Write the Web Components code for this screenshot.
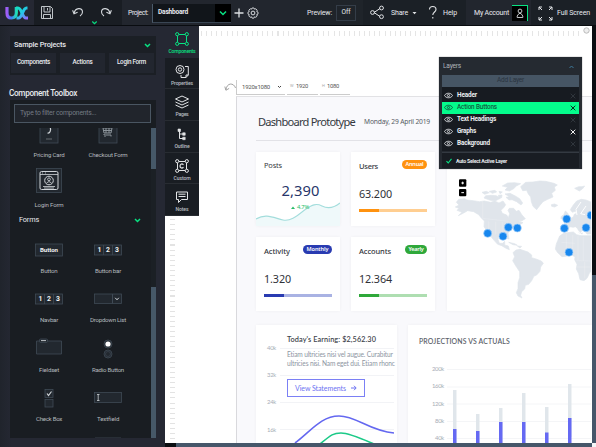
<!DOCTYPE html>
<html lang="en">
<head>
<meta charset="utf-8">
<title>UX builder</title>
<style>
html,body{margin:0;width:596px;height:447px;overflow:hidden;background:#252833;font-family:Roboto,"Liberation Sans",sans-serif;color:#e8eaee}
</style>
</head>
<body>
<ux-app></ux-app>
<script>
const define = (name, css, html) => customElements.define(name, class extends HTMLElement {
  constructor() {
    super();
    const t = document.createElement('template');
    t.innerHTML = `<style>*{box-sizing:border-box}${css}</style>` + (typeof html === 'function' ? html(this) : html);
    this.attachShadow({mode: 'open'}).append(t.content.cloneNode(true));
  }
});
const T = (w, size, text, extra = '') => `<fit-text w="${w}" style="font-size:${size}px;${extra}">${text}</fit-text>`;

define('ux-app', `:host{display:grid;grid-template-rows:26px 421px;width:596px;height:447px}
main{display:grid;grid-template-columns:165px 431px;min-height:0}`,
`<ux-topbar></ux-topbar><main><ux-sidebar></ux-sidebar><ux-workspace></ux-workspace></main>`);

define('ux-topbar', `:host{display:grid;grid-template-columns:34px 88px 178px 63px 103px 65px 65px;height:26px;border-bottom:1px solid #090c10;background:#1b2026}
div{display:flex;align-items:center;height:25px}
svg{display:block;flex:none}
.l{background:#252833;padding-left:5px}
.s{background:#191d23}.p{background:#22262e;padding-left:6px}
.sel{width:79px;height:19px;border-left:1px solid #4b5b6b;border-bottom:1px solid #3a4654;background:#11151a;margin-left:4px;padding-left:5px;justify-content:space-between}
.sel fit-text{padding-top:1px}
.dd{width:16px;height:18px;background:#000;justify-content:center}
.off{width:20px;height:16px;border:1px solid #343d48;justify-content:center;margin-left:4px}
.pv{padding-left:7px;background:#1f242a}.a{background:#22262e;padding-left:8px}
.u{width:16px;height:16px;background:#000;border-top:1px solid #09e283;border-right:1.5px solid #09e283;justify-content:center;margin-left:3px}
.f{padding-left:7px}.pv,.p,.a,.f{padding-top:1px}`,
`<div class="l"><svg width="24" height="14" viewBox="0 0 24 14" fill="none" stroke-width="3.2"><defs><linearGradient id="a"><stop stop-color="#a35cf5"/><stop offset=".45" stop-color="#3f7df5"/><stop offset="1" stop-color="#20dfb5"/></linearGradient><linearGradient id="b" x2="1" y2="1"><stop stop-color="#12e0c2"/><stop offset=".5" stop-color="#25c7e9"/><stop offset="1" stop-color="#9a63ff"/></linearGradient></defs><path d="M2 1V7Q2 12 6.500 12T11.300 7V1" stroke="url(#a)"/><path d="M11 2h2c4 0 4 10 8 10h2" stroke="url(#b)"/><path d="M22.500 2h-1c-4 0-4 10-8 10h-2" stroke="url(#b)"/></svg></div>
<div class="s"><svg width="88" height="25" viewBox="34 0 88 25" fill="none" stroke="#d3d7db"><path d="M41.500 6.500h9l2 2v10h-11zM44 7v5h6V7M47.500 8v2.500M43.500 18v-3.500h7V18" stroke-width=".9"/><path d="M74 13.500C75 7.500 82.500 7 82.500 12c0 2-1 3-2.500 4M72.600 10.300l1.400 3.400 3.600-1.400M110 13.500C109 7.500 101.500 7 101.500 12c0 2 1 3 2.500 4M111.400 10.300l-1.400 3.400-3.600-1.400" stroke-width="1.100"/><path d="M92.300 21.500l2.200 2.200 2.200-2.200" stroke="#08dc80" stroke-width="1.200"/></svg></div>
<div class="p">${T(20,6.8,'Project:')}<div class="sel">${T(30,6.6,'Dashboard','font-weight:700')}<div class="dd"><svg width="8" height="6" viewBox="0 0 8 6"><path d="M1 1.500l3 3 3-3" fill="none" stroke="#08e283" stroke-width="1.500"/></svg></div></div>
<svg width="30" height="18" viewBox="0 0 30 18" fill="none" stroke="#dcdfe2"><path d="M3.500 9h9M8 4.500v9" stroke-width="1.300"/><circle cx="22" cy="9" r="1.900"/><path d="M21 4h2l.5 1.200 1.400-.4 1.300 1.400-.5 1.300 1.300.6v2l-1.300.5.5 1.400-1.400 1.300-1.300-.5-.5 1.300h-2l-.5-1.300-1.400.5-1.300-1.400.5-1.300-1.300-.5v-2l1.300-.6-.5-1.300 1.400-1.400 1.300.4z" stroke-width=".9"/></svg></div>
<div class="pv">${T(25,7,'Preview:')}<div class="off">${T(9,6.6,'Off')}</div></div>
<div><svg width="28" height="25" viewBox="363 0 28 25" fill="none" stroke="#e1e3e6"><path d="M374 12.500l6-4M374 12.500l6 4"/><circle cx="372.500" cy="12.500" r="1.900"/><circle cx="381.500" cy="8" r="1.900"/><circle cx="381.500" cy="16.700" r="1.900"/></svg>${T(17,7,'Share','padding-top:1px')}<svg width="35" height="25" viewBox="408 0 35 25"><path d="M412.500 12h4l-2 2.300z" fill="#e1e3e6"/><path d="M429.500 9.500c0-4 6.500-4 6.500 0 0 2.500-3.200 2.500-3.200 5.500M432.800 17v1.600" fill="none" stroke="#e1e3e6" stroke-width="1.100"/></svg>${T(14,7,'Help','padding-top:1px')}</div>
<div class="a">${T(35,7,'My Account')}<div class="u"><svg width="8" height="11" viewBox="0 0 8 11" fill="none" stroke="#d6d9dc" stroke-width=".9"><circle cx="4" cy="3" r="1.900"/><path d="M1.200 9.500V8L3 5.500h2L6.800 8v1.500z"/></svg></div></div>
<div class="f"><svg width="15" height="15" viewBox="0 0 15 15" fill="none" stroke="#e3e5e8"><path d="M1 4V1h3M1 1l3 3M11 1h3v3M14 1l-3 3M1 11v3h3M1 14l3-3M14 11v3h-3M14 14l-3-3"/></svg>${T(33,7,'Full Screen','margin-left:4px')}</div>`);

define('ux-sidebar', `:host{display:flex;flex-direction:column;height:421px;padding:10px 10px 9px;background:linear-gradient(90deg,#20242c,#252833 12px)}
.sp{height:39px;flex:none;background:#1b1f25;width:146px}
.h{display:flex;align-items:center;justify-content:space-between;height:17px;padding:1px 5px 0 4px}
.b{display:flex;gap:4px;padding-left:1px}
.b div{width:45px;height:20px;background:#22262f;display:flex;align-items:center;justify-content:center}
.t{height:25px;padding-top:6px;margin-left:-1px}
.box{width:146px;height:338px;background:#191d22;padding:4px 0 0 4px}
.in{width:137px;height:19px;border:1px solid #4a5662;background:#21252c;display:flex;align-items:center;padding-left:5px;color:#747c85}
.scroll{margin-top:5px;height:310px;display:grid;grid-template-columns:136.500px 5px}
.list{height:310px;overflow:hidden}
.g{display:grid;grid-template-columns:59px 59px;grid-auto-rows:49.500px;padding-left:5.500px}
.g.f{margin-top:-14px}
.fm{height:16.500px;display:flex;justify-content:space-between;align-items:center;padding:0 10px 2px 5px}
.bar{width:5px;background:linear-gradient(#465868 0 41px,#1b2025 41px 159px,#465868 159px)}
svg{display:block}`,
`<div class="sp"><div class="h">${T(52,7.4,'Sample Projects','font-weight:500')}<svg width="7" height="5" viewBox="0 0 7 5"><path d="M1 1l2.500 2.500L6 1" fill="none" stroke="#08e283" stroke-width="1.500"/></svg></div><div class="b"><div>${T(33,6.300,'Components','font-weight:500')}</div><div>${T(20,6.300,'Actions','font-weight:500')}</div><div>${T(29,6.300,'Login Form','font-weight:500')}</div></div></div>
<div class="t">${T(68,8.200,'Component Toolbox','font-weight:500')}</div>
<div class="box"><div class="in">${T(76,6.800,'Type to filter components...')}</div><div class="scroll"><div class="list">
<div class="g f"><ux-tool icon="pricing" w="31">Pricing Card</ux-tool><ux-tool icon="cart" w="39">Checkout Form</ux-tool><ux-tool icon="login" w="29">Login Form</ux-tool></div>
<div class="fm">${T(20,7.300,'Forms')}<svg width="7" height="5" viewBox="0 0 7 5"><path d="M1 1l2.500 2.500L6 1" fill="none" stroke="#08e283" stroke-width="1.500"/></svg></div>
<div class="g"><ux-tool icon="button" w="17">Button</ux-tool><ux-tool icon="bar" w="26">Button bar</ux-tool><ux-tool icon="bar" w="18">Navbar</ux-tool><ux-tool icon="drop" w="36">Dropdown List</ux-tool><ux-tool icon="field" w="20">Fieldset</ux-tool><ux-tool icon="radio" w="32">Radio Button</ux-tool><ux-tool icon="check" w="26">Check Box</ux-tool><ux-tool icon="text" w="22">Textfield</ux-tool><ux-tool icon="none" w="1"></ux-tool><ux-tool icon="next" w="1"></ux-tool></div>
</div><div class="bar"></div></div></div>`);

const B = 'fill="#22282f" stroke="#3f4a55" stroke-width=".8"', I = 'fill="none" stroke="#cfd4d8"';
const num = 'font-weight="700" fill="#f1f2f3" text-anchor="middle"';
const tools = {
  pricing: `<rect x="-9" y="-12" width="18" height="21" ${B}/><path d="M-2-7.500q4 0 3.500 3.500t-3 3" ${I} stroke-width="1.200"/><path d="M-3 5h6" ${I} stroke-width=".4"/>`,
  cart: `<rect x="-9" y="-12" width="18" height="21" ${B}/><path d="M-5-6h9l-1 5h-7zM-4-3.500h8M-2-6v5M1-6v5M-4 0v1h7v1.500M-3.500 2.500h1" fill="none" stroke="#8c949b"/>`,
  login: `<rect x="-12.500" y="-15.500" width="25" height="24" ${B}/><rect x="-9" y="-12.500" width="18" height="18" rx="1.500" ${I}/><path d="M-9-9.500h18M-7-11h1M-4-11h1M-6 2.500h12" ${I} stroke-width=".8"/><circle cy="-3.500" r="4.300" ${I}/><circle cy="-4.700" r="1.400" ${I} stroke-width=".8"/><path d="M-2.500-1q2.500-3 5 0M-5 4h10" ${I} stroke-width=".8"/>`,
  button: `<rect x="-13.500" y="-6" width="27" height="12" ${B}/><text y="2.300" ${num} font-size="6.100" textLength="18">Button</text>`,
  bar: `<rect x="-13.500" y="-5" width="27" height="10" ${B}/><path d="M-4.500-5v10M4.500-5v10" stroke="#3f4a55" stroke-width=".8"/><g font-size="6.800"><text x="-8.500" y="2.400" ${num}>1</text><text x="0" y="2.400" ${num}>2</text><text x="9" y="2.400" ${num}>3</text></g>`,
  drop: `<rect x="-13.500" y="-5" width="27" height="9.500" ${B}/><path d="M4.500-5v9.500" stroke="#3f4a55"/><path d="M7.200-1.200L9 .8l1.800-2" ${I}/>`,
  field: `<path d="M-12.500-8h25V5h-25z" ${B}/><rect x="-9.500" y="-10" width="8" height="3.400" rx="1" ${B}/><path d="M-8-8.400h5" ${I} stroke-width=".9"/>`,
  radio: `<circle cy="-5" r="4" ${B}/><circle cy="-5" r="2.600" fill="#fff"/><circle cy="5" r="4" ${B}/><circle cy="5" r="2.500" fill="none" stroke="#3f4a55" stroke-width=".6"/>`,
  check: `<rect x="-4" y="-8.500" width="8" height="8" ${B}/><rect x="-4" y="1.500" width="8" height="7.500" ${B}/><path d="M-2-4.500l1.500 2 3-4" ${I} stroke-width="1.200"/>`,
  text: `<rect x="-13.500" y="-5.500" width="27" height="10" ${B}/><path d="M-11-3.500h2.500M-11 2.500h2.500M-9.800-3.500v6" ${I} stroke-width=".8"/>`,
  none: '', next: `<path d="M-13-10h26v6h-26z" ${B}/>`
};
define('ux-tool', `:host{display:flex;flex-direction:column;align-items:center;padding-top:3px;color:#b4b9be}
svg{overflow:visible;flex:none}fit-text{line-height:7px!important}`,
el => `<svg width="36" height="34" viewBox="-18 -17 36 34">${tools[el.getAttribute('icon')]}</svg>${T(el.getAttribute('w'),6.100,'<slot></slot>')}`);

define('ux-workspace', `:host{display:grid;grid-template-columns:427px 4px;grid-template-rows:417px 4px;height:421px;position:relative}
.c{background:#fff;display:grid;grid-template-columns:71px 356px;position:relative;overflow:hidden}
.v{background:linear-gradient(#0b0e12 249px,#46576a 249px)}
.hb{background:linear-gradient(90deg,#0b0e12 11px,#46576a 11px)}.k{background:#f5f6f8}
.left{display:flex;flex-direction:column}
.vr{flex:1;width:5px;margin:3px 0 0 5px;background:repeating-linear-gradient(#e3e3e3 0 1px,transparent 1px 5.100px)}
.top{height:70px;padding-top:5px;position:relative}
.hr{height:5px;margin:0 11px 0 -35px;background:repeating-linear-gradient(90deg,#e5e5e5 0 1px,transparent 1px 5.100px)}
.cir{position:absolute;left:346px;top:0}
.size{display:flex;height:15px;margin-top:44px;color:#555;gap:2px}
.size div{height:15px;border-bottom:1px solid #ccc;display:flex;align-items:center;padding-bottom:1px}
.size div:first-child{width:49px;border-left:1px solid #ccc;padding-left:5px;gap:7px}
.size div:nth-child(2){width:31px;padding-left:3px;gap:3px}.size div:nth-child(3){width:30px;padding-left:2px;gap:2px}
.undo{position:absolute;left:59px;top:56px}
ux-layers{position:absolute;left:274px;top:31px}`,
`<div class="c"><div class="left"><ux-rail></ux-rail><div class="vr"></div></div>
<div><div class="top"><div class="hr"></div><svg class="cir" width="9" height="9"><circle cx="4.500" cy="4.500" r="2.700" fill="#eee" stroke="#bbb"/></svg>
<div class="size"><div>${T(28,6,'1920x1080')}<svg width="5" height="4"><path d="M1 1l1.500 1.500L4 1" fill="none" stroke="#444"/></svg></div><div>${T(3,4,'W','color:#aaa')}${T(12,5.800,'1920')}</div><div>${T(3,4,'H','color:#aaa')}${T(12,5.800,'1080')}</div></div></div>
<ux-artboard></ux-artboard></div>
<svg class="undo" width="13" height="11" viewBox="0 0 14 12" fill="none" stroke="#9a9a9a" stroke-width="1"><path d="M2 8.500C3 .5 10.500.5 12.500 6.500M.8 5l1.200 4 3.500-2"/></svg></div>
<div class="v"></div><div class="hb"></div><div class="k"></div><ux-layers></ux-layers>`);

define('ux-rail', `:host{display:grid;grid-template-rows:repeat(6,31.650px);width:34px;height:190px;background:#191d23}`,
`<ux-tab icon="comp" w="27" on>Components</ux-tab><ux-tab icon="prop" w="22">Properties</ux-tab><ux-tab icon="pages" w="13">Pages</ux-tab><ux-tab icon="outline" w="15">Outline</ux-tab><ux-tab icon="custom" w="17">Custom</ux-tab><ux-tab icon="notes" w="13">Notes</ux-tab>`);
const corners = '<path d="M-3-4.500h6M-3 4.500h6M-4.500-3v6M4.500-3v6"/><circle cx="-4.800" cy="-4.800" r="1.600"/><circle cx="4.800" cy="-4.800" r="1.600"/><circle cx="-4.800" cy="4.800" r="1.600"/><circle cx="4.800" cy="4.800" r="1.600"/>';
const tabs = {
  comp: corners,
  prop: '<circle cx="-2" cy="-1.500" r="4"/><circle cx="-2" cy="-1.500" r="1.700"/><path d="M3-4.500h3.300V4L4 6.500H-1V4M4 6.500V4h2.300" />',
  pages: '<path d="M0-6l6.500 3L0 0l-6.500-3zM-6.500 0L0 3l6.500-3M-6.500 3L0 6l6.500-3"/>',
  outline: '<path d="M-2.500-4V4.500H1M-2.500 0H1"/><path d="M-4-5h2.500v2.500H-4zM.7-1.200h2.500v2.500H.7zM.7 3.200h2.500v2.500H.7z" fill="#e2e4e6" stroke-width=".6"/>',
  custom: corners + '<path d="M1.500-1.300C-.5-3-2-1.500-2 0S-.5 3 1.500 1.300" stroke-width="1.200"/>',
  notes: '<path d="M-5.500-5h11v7.500H-.5L-3.500 5.500v-3h-2zM-3.500-2.800h7M-3.500-.5h7"/>'
};
define('ux-tab', `:host{display:flex;flex-direction:column;align-items:center;padding-top:4px;border-bottom:1px solid #282c32;color:#b8bcc1;stroke:#e2e4e6}
:host([on]){background:#252833;color:#08e283;stroke:#08e283;border-color:#252833}
svg{flex:none;overflow:visible}fit-text{line-height:6px!important;font-weight:500}`,
el => `<svg width="18" height="18" viewBox="-9 -9 18 18" fill="none" stroke-width="1">${tabs[el.getAttribute('icon')]}</svg>${T(el.getAttribute('w'),5.100,'<slot></slot>')}`);

define('ux-artboard', `:host{display:block;width:356px;height:347px;border-left:1px solid #d9d9dd;border-top:1px solid #e2e2e5;background:#f9f9fc;padding-left:19px;font-family:"Noto Sans","Open Sans",sans-serif;color:#343840;overflow:hidden}
header{display:flex;align-items:center;height:44px;padding:7px 0 0 2px;border-bottom:1px solid #e2e2e7;gap:9px}
.s{display:grid;grid-template-columns:84px 84px 144px;grid-template-rows:74px 74px;gap:11px 11px;padding-top:11px}
ux-map{grid-column:3;grid-row:1/3;margin:0 -1px 0 1px}
.c{display:grid;grid-template-columns:141px 184px;gap:11px;margin-top:14px}`,
`<header>${T(97,11.100,'Dashboard Prototype')}${T(66,6.700,'Monday, 29 April 2019','color:#555b63')}</header>
<div class="s"><ux-posts></ux-posts><ux-stat name="Users" nw="19" value="63.200" vw="33" tag="Annual" tw="25" color="#ff920f" pale="#ffce91"></ux-stat><ux-map></ux-map><ux-stat name="Activity" nw="26" value="1.320" vw="27" tag="Monthly" tw="29" color="#293bb1" pale="#a9b2e3"></ux-stat><ux-stat name="Accounts" nw="32" value="12.364" vw="33" tag="Yearly" tw="22" color="#2fa83a" pale="#aedeb1"></ux-stat></div>
<div class="c"><ux-earnings></ux-earnings><ux-projections></ux-projections></div>`);
const card = 'background:#fff;box-shadow:0 0 3px #0000000c;';

define('ux-posts', `:host{display:flex;flex-direction:column;${card}padding:9px 0 0 8px;position:relative}
.n{display:flex;justify-content:center;margin:10px 3px 0 0;height:20px;color:#27366a}
.p{display:flex;align-items:center;justify-content:center;margin:4px 4px 0 0;height:7px;gap:2px;color:#28bd69;z-index:1}
.w{position:absolute;left:0;bottom:0}`,
`<svg class="w" width="84" height="25" viewBox="0 0 84 25"><path d="M0 18C10 12 18 17 27 19S44 12 50 8s10-6 16-3 13 1 18-3v23H0z" fill="#eff9fa"/><path d="M0 18C10 12 18 17 27 19S44 12 50 8s10-6 16-3 13 1 18-3" fill="none" stroke="#a3dddc" stroke-width="1.100"/></svg>
${T(18,7.400,'Posts','line-height:9px')}<div class="n">${T(38,14.700,'2,390','line-height:20px')}</div><div class="p"><svg width="4" height="3"><path d="M0 3l2-2.500L4 3z" fill="#28bd69"/></svg>${T(12,5.800,'4.7%')}</div>`);

define('ux-stat', `:host{display:block;${card}padding:8px 8px 0}
.h{display:flex;justify-content:space-between;height:12px}
.tag{height:9px;border-radius:5px;color:#fff;display:flex;align-items:center;justify-content:center;font-weight:600}
.v{height:19px;margin-top:9px;color:#303238}.b{height:3px;margin-top:9px}`,
el => { const a = n => el.getAttribute(n); return `<div class="h">${T(a('nw'),7.500,a('name'),'line-height:13px;font-weight:500')}<div class="tag" style="width:${a('tw')}px;background:${a('color')}">${T(a('tw')-7,5.500,a('tag'))}</div></div><div class="v">${T(a('vw'),10.800,a('value'),'line-height:16px')}</div><div class="b" style="background:linear-gradient(90deg,${a('color')} 30%,${a('pale')} 30%)"></div>`; });

const pins = [[173,205],[219,214],[235,187],[262,189],[410,162],[403,190],[468,188],[483,151],[417,262]];
define('ux-map', `:host{display:block;${card}}svg{display:block}`,
`<svg width="144" height="159" viewBox="51 -39 432 477"><g fill="#e0e5eb" stroke="#e0e5eb" stroke-linejoin="round" stroke-width="2">
<path d="M79 112L86 103 104 101 111 105 130 107 148 110 163 108 182 112 194 108 207 114 219 108 227 119 222 127 213 136 217 145 230 150 235 158 239 146 234 136 238 130 251 130 259 139 267 136 276 150 286 161 276 167 264 167 279 173 270 179 262 177 253 188 243 194 234 204 237 222 231 220 226 210 208 213 204 223 208 235 218 235 224 229 224 240 235 243 238 254 228 250 215 242 203 238 192 226 181 212 176 205 169 195 162 185 163 168 154 159 146 149 131 140 113 137 101 144 85 152 96 142 81 136 87 130 76 126 87 120z"/>
<path d="M272 65L287 52 309 51 329 48 347 49 372 55 382 60 373 66 376 76 365 85 369 96 353 103 339 110 329 122 320 134 309 124 304 110 302 96 295 87 290 76 278 77zM217 63l16-9 21-1 18 3-13 7-8 8-13 7-13-3 8-8zM162 99l5-7 17-1 15 1 12 8-14 7-16-1zM225 87l15-2 16 8 13 8 9 13-5 6-13-10-14-6-9 1-9-8 10-2zM156 82l13-3 9 4-14 5zM178 79l17-3 5 5-13 4zM207 79l10 2-7 5zM205 91l11-1-1 8-8 1zM364 119l10-2 9 4-9 5-9-2zM434 70l12-5 10 0 8-2-7 9-9 6zM236 232l18 4 8 5-13-2zM262 243l13 1-5 5z"/>
<path d="M249 263L258 255 270 253 285 258 294 261 305 270 305 278 318 282 334 288 340 295 332 306 330 319 319 331 312 333 305 347 296 358 286 361 284 372 275 380 272 391 276 399 264 393 259 383 264 371 264 353 269 338 269 320 260 307 248 287 254 275z"/>
<path d="M401 150l5-12 7 6 6 13-8 4-10 1zM393 155l6-4 1 8-7 3zM421 134L430 120 440 108 454 103 468 105 483 111V207L471 207 463 197 454 196 457 207 448 204 443 191 436 185 430 187 418 185 415 197 404 202 395 198 395 186 406 183 402 173 415 169 420 161 430 156 433 148 440 145 437 138 427 142z"/>
<path d="M389 213L401 205 420 202 430 201 440 209 453 212 468 212 483 212V320L480 321 471 340 462 347 450 344 446 326 439 312 441 298 434 284 435 275 422 269 408 274 396 275 382 262 376 252 379 237z"/></g>
<g stroke="#fff" stroke-width="3" fill="none"><path d="M453 111l-15 22 3 17M468 123l-16 23 13 3M435 189l17 16 6-7"/></g><g stroke="#f3f5f7" stroke-width=".8" fill="none"><path d="M158 109v51l78 9M176 169v31M197 170v39M217 171v39M394 232l41 3M409 206v67M428 210v61M444 213v72M460 215v73M439 287l43 1M440 306h40M464 290v50"/></g>
<g fill="#1887ee" stroke="#a8d2fa" stroke-width="2">${pins.map(p=>`<circle cx="${p[0]}" cy="${p[1]}" r="12"/>`).join('')}</g>
<rect x="87" y="43" width="22" height="22" rx="3"/><rect x="87" y="72" width="22" height="22" rx="3"/><path d="M94 54h8M98 50v8M94 83h8" stroke="#fff" stroke-width="3"/></svg>`);

define('ux-earnings', `:host{display:grid;grid-template-columns:21px 117px;height:118px;${card}padding-left:3px;position:relative;font-family:Lato,"Open Sans",sans-serif;overflow:hidden}
.ax{padding:19px 0 0 8px;color:#a7adb7;display:grid;grid-template-rows:repeat(4,27.200px)}
.m{padding:10px 0 0 7px;display:flex;flex-direction:column;color:#8d959f;z-index:1}
.b{display:flex;align-items:center;justify-content:space-between;width:78px;height:18px;border:1px solid #7b80f5;color:#6d73f2;padding:0 7px 0 7px;margin-top:11px;background:#fff}
.l{position:absolute;left:0;top:0}`,
`<svg class="l" width="141" height="118" viewBox="256 325 141 118" fill="none"><path d="M280 348.500h114M280 375.500h114M280 402.500h114M280 429.500h114" stroke="#f2f3f6"/><path d="M295 443C311 431 321 416 339 416S369 431 394 433" stroke="#6468f0" stroke-width="1.600"/><path d="M320 444C331 435 333 433 341 433S360 438 374 444" stroke="#1cca88" stroke-width="1.600"/></svg>
<div class="ax">${['40k','32k','24k','16k'].map(x=>T(9,5.900,x,'line-height:8px')).join('')}</div>
<div class="m">${T(89,7.300,"Today's Earning: $2,562.30",'line-height:10px;font-weight:600;color:#3f454d')}${T(106,6.600,'Etiam ultricies nisi vel augue. Curabitur','line-height:9px;margin-top:5px')}${T(108,6.600,'ultricies nisi. Nam eget dui. Etiam rhonc','line-height:9px')}<div class="b">${T(51,7,'View Statements')}<svg width="6" height="6"><path d="M0 3h5M3 .8L5.200 3 3 5.200" fill="none" stroke="#6d73f2"/></svg></div></div>`);

const bars = [[453,390,429],[476,414,431],[499,408,422],[522,393,422],[545,407,432.5],[568,384,418]];
define('ux-projections', `:host{display:block;height:118px;${card}padding:11px 0 0 11px;position:relative;font-family:Lato,"Open Sans",sans-serif;color:#5b616a;overflow:hidden}
.a{display:grid;grid-template-rows:repeat(5,17.300px);margin-top:19px;width:25px;justify-items:end;color:#a7adb7}
svg{position:absolute;left:0;top:0}`,
`<svg width="184" height="118" viewBox="408 325 184 118"><path d="M447 369.500h144M447 387h144M447 404h144M447 421.500h144M447 438.500h144" stroke="#f4f5f7"/>${bars.map(b=>`<path d="M${b[0]} ${b[1]}h3.500v53h-3.500z" fill="#e0e6eb"/><path d="M${b[0]} ${b[2]}h3.500v30h-3.500z" fill="#6569f3"/>`).join('')}</svg>
${T(91,6.900,'PROJECTIONS VS ACTUALS','line-height:10px;display:block;font-weight:600')}
<div class="a">${[['200k',12],['160k',12],['120k',12],['80k',9],['40k',9]].map(x=>T(x[1],5.900,x[0],'line-height:8px')).join('')}</div>`);

define('ux-layers', `:host{display:block;width:143px;height:112px;background:#252a31;padding:1px 3px 0 3px;box-shadow:0 0 1px #0008}
.h{height:17px;display:flex;align-items:center;justify-content:space-between;padding:1px 5px 0 1px;color:#aeb3b9}
.add{height:12px;background:#465564;display:flex;align-items:center;justify-content:center;color:#2a343f}
.r{padding-top:3px;background:#171b21;height:64px}
.f{height:16px;border-top:1px solid #343a42;margin-top:1px;background:#191d23;display:flex;align-items:center;gap:4px;padding-left:4px}`,
`<div class="h">${T(18,6.600,'Layers')}<svg width="5" height="4"><path d="M.5 3l2-2 2 2" fill="none" stroke="#3f7a9d"/></svg></div><div class="add">${T(27,6.500,'Add Layer')}</div>
<div class="r"><ux-layer w="20">Header</ux-layer><ux-layer w="40" on>Action Buttons</ux-layer><ux-layer w="39">Text Headings</ux-layer><ux-layer w="19" x>Graphs</ux-layer><ux-layer w="33">Background</ux-layer></div>
<div class="f"><svg width="6" height="6"><path d="M.5 3.200l1.700 1.800L5.500.8" fill="none" stroke="#08e283" stroke-width="1.100"/></svg>${T(51,5.200,'Auto Select Active Layer','font-weight:700;padding-top:1px')}</div>`);
define('ux-layer', `:host{display:flex;align-items:center;height:11.900px;padding:0 3px 0 2px;gap:4px;color:#eceef0;stroke:#dde0e3;font-weight:700;--x:#30363d}
:host([x]){--x:#f0f0f0}:host([on]){background:#04fc8c;color:#125b40;stroke:#13533c;font-weight:500;--x:#0b2d20}
.x{margin-left:auto;stroke:var(--x)}svg{flex:none}`,
el => `<svg width="9" height="7" viewBox="0 0 9 7" fill="none" stroke-width=".9"><path d="M.5 3.500C2 .5 7 .5 8.500 3.500 7 6.500 2 6.500.5 3.500z"/><circle cx="4.500" cy="3.500" r="1.100"/></svg>${T(el.getAttribute('w'),6.400,'<slot></slot>')}<svg class="x" width="6" height="6"><path d="M.7.7l4.600 4.600M5.300.7L.7 5.300"/></svg>`);

/* A one-line label that spreads its letters to fill the given width. */
customElements.define('fit-text', class extends HTMLElement {
  constructor() {
    super();
    this.attachShadow({mode: 'open'}).innerHTML = '<style>:host{display:inline-block;white-space:nowrap;line-height:1.2;flex:none}</style><span><slot></slot></span>';
  }
  connectedCallback() {
    const w = +this.getAttribute('w'), s = this.shadowRoot.querySelector('span');
    const slot = this.querySelector('slot');
    const text = slot ? slot.assignedNodes().map(n => n.textContent).join('') : this.textContent;
    const natural = s.getBoundingClientRect().width;
    this.style.width = w + 'px';
    if (text.length) s.style.letterSpacing = (w - natural) / text.length + 'px';
  }
});
</script>
</body>
</html>
